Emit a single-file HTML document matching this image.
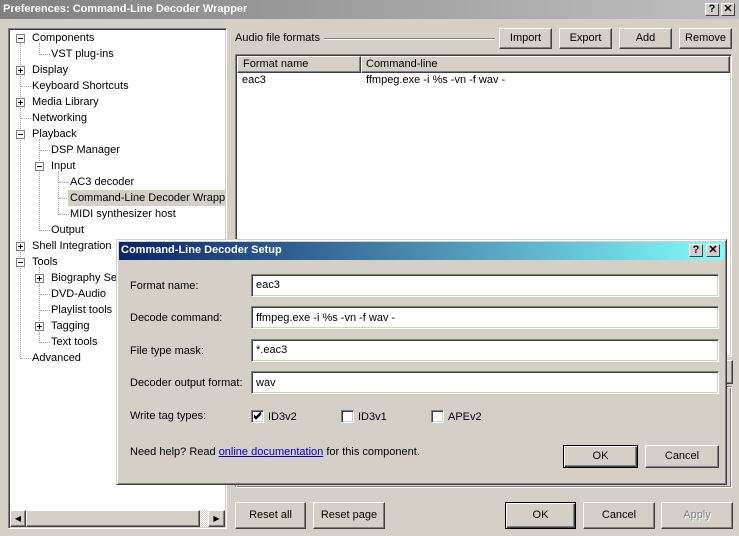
<!DOCTYPE html>
<html><head><meta charset="utf-8"><style>
*{box-sizing:border-box;margin:0;padding:0}
body{width:739px;height:536px;background:#d4d0c8;font:11px "Liberation Sans",sans-serif;color:#000;position:relative;overflow:hidden}
.a{position:absolute}
.t{position:absolute;white-space:nowrap;line-height:13px}
.btn{position:absolute;background:#d4d0c8;border:1px solid;border-color:#fff #404040 #404040 #fff;box-shadow:inset -1px -1px 0 #808080;text-align:center;font-size:11px}
.def{border:1px solid #000;box-shadow:inset 1px 1px 0 #fff,inset -1px -1px 0 #404040,inset -2px -2px 0 #808080}
.sunk{position:absolute;border:1px solid;border-color:#808080 #fff #fff #808080;box-shadow:inset 1px 1px 0 #404040,inset -1px -1px 0 #d4d0c8;background:#fff}
.box{position:absolute;width:9px;height:9px;border:1px solid #808080;background:#fff}
.box:before{content:"";position:absolute;left:1px;top:3px;width:5px;height:1px;background:#000}
.plus:after{content:"";position:absolute;left:3px;top:1px;width:1px;height:5px;background:#000}
.vd{position:absolute;width:1px;border-left:1px dotted #a0a0a0}
.hd{position:absolute;height:1px;border-top:1px dotted #a0a0a0}
.tb{position:absolute;width:14px;height:13px;background:#d4d0c8;border:1px solid;border-color:#fff #404040 #404040 #fff;font:bold 11px "Liberation Sans",sans-serif;text-align:center;line-height:11px}
.cb{position:absolute;width:13px;height:13px;border:1px solid;border-color:#808080 #fff #fff #808080;box-shadow:inset 1px 1px 0 #404040,inset -1px -1px 0 #d4d0c8;background:#fff}
.tree{position:absolute;left:0;top:0;width:225px;height:510px;overflow:hidden}
</style></head><body>
<div class="a" style="left:0;top:0;width:739px;height:19px;background:linear-gradient(90deg,#808080,#c0c0c0)"></div>
<div class="t" style="left:3px;top:3px;color:#fff;font-weight:bold;font-size:11px">Preferences: Command-Line Decoder Wrapper</div>
<div class="tb" style="left:705px;top:3px">?</div>
<div class="tb" style="left:721px;top:3px">✕</div>

<div class="sunk" style="left:8px;top:28px;width:219px;height:501px"></div>
<div class="tree">
<div class="vd" style="left:20px;top:43px;height:316px"></div>
<div class="vd" style="left:39px;top:139px;height:92px"></div>
<div class="vd" style="left:58px;top:171px;height:44px"></div>
<div class="vd" style="left:39px;top:267px;height:76px"></div>
<div class="vd" style="left:39px;top:43px;height:12px"></div>
<div class="hd" style="left:40px;top:54px;width:10px"></div>
<div class="hd" style="left:21px;top:86px;width:10px"></div>
<div class="hd" style="left:21px;top:118px;width:10px"></div>
<div class="hd" style="left:40px;top:150px;width:10px"></div>
<div class="hd" style="left:59px;top:182px;width:10px"></div>
<div class="hd" style="left:59px;top:198px;width:10px"></div>
<div class="hd" style="left:59px;top:214px;width:10px"></div>
<div class="hd" style="left:40px;top:230px;width:10px"></div>
<div class="hd" style="left:40px;top:294px;width:10px"></div>
<div class="hd" style="left:40px;top:310px;width:10px"></div>
<div class="hd" style="left:40px;top:342px;width:10px"></div>
<div class="hd" style="left:21px;top:358px;width:10px"></div>
<div class="box" style="left:16px;top:34px"></div>
<div class="box plus" style="left:16px;top:66px"></div>
<div class="box plus" style="left:16px;top:98px"></div>
<div class="box" style="left:16px;top:130px"></div>
<div class="box" style="left:35px;top:162px"></div>
<div class="box plus" style="left:16px;top:242px"></div>
<div class="box" style="left:16px;top:258px"></div>
<div class="box plus" style="left:35px;top:274px"></div>
<div class="box plus" style="left:35px;top:322px"></div>
<div class="a" style="left:68px;top:190px;width:157px;height:16px;background:#d4d0c8"></div>
<div class="t" style="left:32px;top:32px">Components</div>
<div class="t" style="left:51px;top:48px">VST plug-ins</div>
<div class="t" style="left:32px;top:64px">Display</div>
<div class="t" style="left:32px;top:80px">Keyboard Shortcuts</div>
<div class="t" style="left:32px;top:96px">Media Library</div>
<div class="t" style="left:32px;top:112px">Networking</div>
<div class="t" style="left:32px;top:128px">Playback</div>
<div class="t" style="left:51px;top:144px">DSP Manager</div>
<div class="t" style="left:51px;top:160px">Input</div>
<div class="t" style="left:70px;top:176px">AC3 decoder</div>
<div class="t" style="left:70px;top:192px">Command-Line Decoder Wrappe</div>
<div class="t" style="left:70px;top:208px">MIDI synthesizer host</div>
<div class="t" style="left:51px;top:224px">Output</div>
<div class="t" style="left:32px;top:240px">Shell Integration</div>
<div class="t" style="left:32px;top:256px">Tools</div>
<div class="t" style="left:51px;top:272px">Biography Ser</div>
<div class="t" style="left:51px;top:288px">DVD-Audio</div>
<div class="t" style="left:51px;top:304px">Playlist tools</div>
<div class="t" style="left:51px;top:320px">Tagging</div>
<div class="t" style="left:51px;top:336px">Text tools</div>
<div class="t" style="left:32px;top:352px">Advanced</div>
</div>
<div class="a" style="left:10px;top:510px;width:215px;height:17px;background:repeating-conic-gradient(#fff 0 25%,#d4d0c8 0 50%) 0 0/2px 2px"></div>
<div class="btn" style="left:10px;top:510px;width:16px;height:17px;font-size:8px;line-height:15px">◀</div>
<div class="btn" style="left:26px;top:510px;width:174px;height:17px"></div>
<div class="btn" style="left:208px;top:510px;width:17px;height:17px;font-size:8px;line-height:15px">▶</div>

<div class="t" style="left:235px;top:32px">Audio file formats</div>
<div class="a" style="left:324px;top:38px;width:171px;height:2px;border-top:1px solid #808080;border-bottom:1px solid #fff"></div>
<div class="btn" style="left:499px;top:28px;width:53px;height:21px;line-height:19px">Import</div>
<div class="btn" style="left:559px;top:28px;width:53px;height:21px;line-height:19px">Export</div>
<div class="btn" style="left:619px;top:28px;width:53px;height:21px;line-height:19px">Add</div>
<div class="btn" style="left:679px;top:28px;width:53px;height:21px;line-height:19px">Remove</div>
<div class="sunk" style="left:235px;top:54px;width:497px;height:303px"></div>
<div class="btn" style="left:237px;top:56px;width:124px;height:17px;text-align:left;padding-left:5px;line-height:14px">Format name</div>
<div class="btn" style="left:361px;top:56px;width:369px;height:17px;text-align:left;padding-left:4px;line-height:14px">Command-line</div>
<div class="t" style="left:242px;top:74px">eac3</div>
<div class="t" style="left:366px;top:74px">ffmpeg.exe -i %s -vn -f wav -</div>
<div class="btn" style="left:720px;top:360px;width:13px;height:24px"></div>
<div class="a" style="left:235px;top:386px;width:497px;height:102px;border:1px solid;border-color:#808080 #fff #fff #808080;box-shadow:inset 1px 1px 0 #fff,inset -1px -1px 0 #808080"></div>
<div class="btn" style="left:235px;top:502px;width:71px;height:27px;line-height:25px">Reset all</div>
<div class="btn" style="left:313px;top:502px;width:72px;height:27px;line-height:25px">Reset page</div>
<div class="btn def" style="left:505px;top:502px;width:71px;height:27px;line-height:25px">OK</div>
<div class="btn" style="left:583px;top:502px;width:72px;height:27px;line-height:25px">Cancel</div>
<div class="btn" style="left:661px;top:502px;width:72px;height:27px;line-height:25px;color:#808080;text-shadow:1px 1px 0 #fff">Apply</div>

<div class="a" style="left:116px;top:239px;width:611px;height:246px;background:#d4d0c8;border:1px solid;border-color:#d4d0c8 #404040 #404040 #d4d0c8;box-shadow:inset 1px 1px 0 #fff,inset -1px -1px 0 #808080"></div>
<div class="a" style="left:119px;top:242px;width:605px;height:18px;background:linear-gradient(90deg,#0a246a,#4a8cb0 50%,#80fcfc)"></div>
<div class="t" style="left:121px;top:244px;color:#fff;font-weight:bold">Command-Line Decoder Setup</div>
<div class="tb" style="left:689px;top:244px">?</div>
<div class="tb" style="left:706px;top:244px">✕</div>
<div class="t" style="left:130px;top:280px">Format name:</div>
<div class="t" style="left:130px;top:312px">Decode command:</div>
<div class="t" style="left:130px;top:345px">File type mask:</div>
<div class="t" style="left:130px;top:377px">Decoder output format:</div>
<div class="t" style="left:130px;top:410px">Write tag types:</div>
<div class="sunk" style="left:251px;top:274px;width:468px;height:23px"></div>
<div class="sunk" style="left:251px;top:306px;width:468px;height:23px"></div>
<div class="sunk" style="left:251px;top:339px;width:468px;height:23px"></div>
<div class="sunk" style="left:251px;top:371px;width:468px;height:23px"></div>
<div class="t" style="left:256px;top:279px">eac3</div>
<div class="t" style="left:256px;top:312px">ffmpeg.exe -i %s -vn -f wav -</div>
<div class="t" style="left:256px;top:344px">*.eac3</div>
<div class="t" style="left:256px;top:377px">wav</div>
<div class="cb" style="left:251px;top:410px"><svg width="11" height="11" style="position:absolute;left:0;top:0"><path d="M2 5 L4 7 L9 2 M2 6 L4 8 L9 3 M2 4 L4 6 L9 1" stroke="#000" fill="none" stroke-width="1"/></svg></div>
<div class="cb" style="left:341px;top:410px"></div>
<div class="cb" style="left:431px;top:410px"></div>
<div class="t" style="left:268px;top:411px">ID3v2</div>
<div class="t" style="left:358px;top:411px">ID3v1</div>
<div class="t" style="left:448px;top:411px">APEv2</div>
<div class="t" style="left:130px;top:446px">Need help? Read <span style="color:#0000c0;text-decoration:underline">online documentation</span> for this component.</div>
<div class="btn def" style="left:563px;top:445px;width:75px;height:23px;line-height:21px">OK</div>
<div class="btn" style="left:645px;top:445px;width:74px;height:23px;line-height:21px">Cancel</div>
</body></html>
